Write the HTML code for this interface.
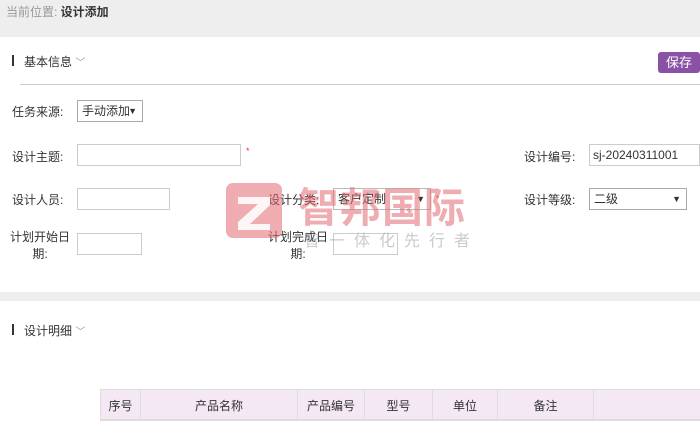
<!DOCTYPE html>
<html><head><meta charset="utf-8"><style>
*{margin:0;padding:0;box-sizing:border-box}
body{width:700px;height:424px;overflow:hidden;background:#fff;font-family:"Liberation Sans","Noto Sans CJK SC",sans-serif;font-size:12px;color:#333;position:relative}
.a{position:absolute;white-space:nowrap}
.inp{position:absolute;border:1px solid #ccc;background:#fff;height:22px}
.sel{position:absolute;border:1px solid #aaa;background:#fff;height:22px;padding-left:4px;line-height:20px}
.arr{position:absolute;right:5px;top:0;font-size:9px}
.tbl{position:absolute;left:100px;top:389px;width:600px;height:32px;background:#f3e8f4;border-top:1px solid #ddd;border-bottom:2px solid #ddd;display:flex}
.tbl div{border-left:1px solid #ddd;text-align:center;line-height:32px;flex-shrink:0}
.wm{opacity:.55}
</style></head><body>
<div class="a" style="left:0;top:0;width:700px;height:37px;background:#eeeeee"></div>
<div class="a" style="left:6px;top:3px;color:#999">当前位置: <b style="color:#333">设计添加</b></div>
<div class="a" style="left:12px;top:55px;width:2px;height:11px;background:#333"></div>
<div class="a" style="left:24px;top:53px">基本信息 <span style="color:#999;font-size:10px">﹀</span></div>
<div class="a" style="left:658px;top:52px;width:42px;height:21px;background:#8a52a6;border-radius:3px;color:#fff;line-height:21px;text-align:center;font-size:13px">保存</div>
<div class="a" style="left:20px;top:84px;width:680px;height:1px;background:#ccc"></div>
<div class="a" style="left:12px;top:103px">任务来源:</div>
<div class="sel" style="left:77px;top:100px;width:66px">手动添加<span class="arr">▼</span></div>
<div class="a" style="left:12px;top:148px">设计主题:</div>
<div class="inp" style="left:77px;top:144px;width:164px"></div>
<div class="a" style="left:246px;top:146px;color:#e33;font-size:9px">*</div>
<div class="a" style="left:524px;top:148px">设计编号:</div>
<div class="inp" style="left:589px;top:144px;width:111px;padding-left:3px;line-height:20px">sj-20240311001</div>
<div class="a" style="left:12px;top:191px">设计人员:</div>
<div class="inp" style="left:77px;top:188px;width:93px"></div>
<div class="a" style="left:524px;top:191px">设计等级:</div>
<div class="sel" style="left:589px;top:188px;width:98px">二级<span class="arr">▼</span></div>
<div class="a" style="left:10px;top:229px;line-height:17px;text-align:center">计划开始日<br>期:</div>
<div class="inp" style="left:77px;top:233px;width:65px"></div>
<div class="a" style="left:268px;top:191px">设计分类:</div>
<div class="a" style="left:333px;top:188px;width:98px;height:22px;border:1px solid #bbb;padding-left:4px;line-height:20px">客户定制<span class="arr">▼</span></div>
<div class="a" style="left:436px;top:194px;color:#e33;font-size:8px">*</div>
<div class="a" style="left:268px;top:229px;line-height:17px;text-align:center">计划完成日<br>期:</div>
<div class="inp" style="left:333px;top:233px;width:65px"></div>
<!-- watermark -->
<div class="a wm" style="left:226px;top:183px;width:56px;height:55px;background:#e26a73;border-radius:7px"></div>
<svg class="a" style="left:226px;top:183px;opacity:.9" width="56" height="55"><path d="M12 14H44V22L24 41H44V47H12V39L32 21H12Z" fill="#fff"/></svg>
<div class="a wm" style="left:298px;top:174px;font-size:41px;color:#e26a73;letter-spacing:1px;font-weight:bold">智邦国际</div>
<div class="a" style="left:304px;top:227px;font-size:16px;color:#999;opacity:.5;letter-spacing:9px">智一体化先行者</div>
<div class="a" style="left:0;top:292px;width:700px;height:9px;background:#eeeeee"></div>
<div class="a" style="left:12px;top:324px;width:2px;height:11px;background:#333"></div>
<div class="a" style="left:24px;top:322px">设计明细 <span style="color:#999;font-size:10px">﹀</span></div>
<div class="tbl">
<div style="width:40px">序号</div>
<div style="width:157px">产品名称</div>
<div style="width:67px">产品编号</div>
<div style="width:68px">型号</div>
<div style="width:65px">单位</div>
<div style="width:96px">备注</div>
<div style="width:107px"></div>
</div>
</body></html>
